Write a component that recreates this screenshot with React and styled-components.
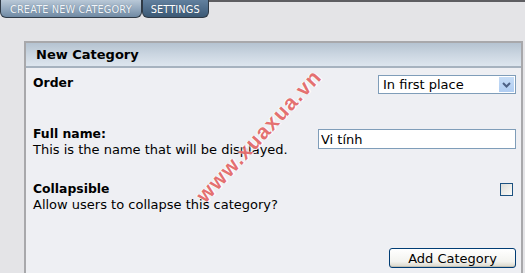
import styled, { createGlobalStyle } from "styled-components";

const Global = createGlobalStyle`
  html, body {
    margin: 0;
    padding: 0;
    background: #e4e4e7;
    font-family: "DejaVu Sans", Verdana, sans-serif;
    color: #000;
  }
`;

const Page = styled.div`
  position: relative;
  width: 525px;
  height: 273px;
  overflow: hidden;
`;

const TabBar = styled.div`
  display: flex;
  height: 19px;
  border-top: 2px solid #5e5e62;
`;
const Tab = styled.div`
  display: flex;
  align-items: center;
  height: 16px;
  margin-top: -2px;
  padding: 1px ${(p) => (p.active ? "9px" : "8px")} 0;
  font-size: 9.8px;
  letter-spacing: 0.1px;
  color: ${(p) => (p.active ? "#f2f6fa" : "#ffffff")};
  background: ${(p) =>
    p.active
      ? "linear-gradient(#b9c8d7, #8ea4ba 60%, #6f89a3)"
      : "linear-gradient(#62809e, #4b6987 60%, #3b5874)"};
  border: 1px solid #2f3a46;
  border-top: none;
  border-radius: 0 0 6px 6px;
  text-shadow: 0 0 1px rgba(40, 60, 80, 0.5);
`;

const Panel = styled.div`
  margin: 20px 2px 0 24px;
  border: 2px solid #a8a8ab;
  border-bottom: none;
  background: #eeeff3;
  height: 240px;
`;
const Header = styled.div`
  height: 23px;
  padding-left: 10px;
  display: flex;
  align-items: center;
  font-size: 13px;
  font-weight: bold;
  background: linear-gradient(#b5c3d1, #cbd6e1 50%, #dde5ee);
  border-bottom: 2px solid #a6b2bf;
`;
const Body = styled.div`
  padding: 7px 5px 0 7px;
  display: flex;
  flex-direction: column;
`;
const Row = styled.div`
  display: flex;
  justify-content: space-between;
  align-items: flex-start;
  height: ${(p) => p.h}px;
`;
const LabelBox = styled.div`
  font-size: 13px;
  line-height: 16px;
`;
const Label = styled.div`
  font-weight: bold;
  font-size: 12.4px;
`;
const SelectWrap = styled.div`
  position: relative;
  width: 138px;
  height: 19px;
  background: #fff;
  border: 1px solid #7f9db9;
  box-sizing: border-box;
`;
const SelectText = styled.div`
  font-size: 13px;
  line-height: 17px;
  padding-left: 4px;
`;
const Arrow = styled.div`
  position: absolute;
  right: 1px;
  top: 1px;
  width: 15px;
  height: 15px;
  background: linear-gradient(#c6dcf6, #b0cdf2);
  display: flex;
  align-items: center;
  justify-content: center;
`;
const TextInput = styled.input`
  width: 198px;
  height: 20px;
  box-sizing: border-box;
  border: 1px solid #7f9db9;
  background: #fff;
  font-family: "DejaVu Sans", Verdana, sans-serif;
  font-size: 13px;
  padding: 0 2px;
  margin-top: 3px;
  outline: none;
`;
const Check = styled.div`
  width: 11px;
  height: 11px;
  margin: 2px 3px 0 0;
  border: 1px solid #1c5180;
  background: linear-gradient(135deg, #dcdcd7, #fbfbf9);
`;
const ButtonRow = styled.div`
  display: flex;
  justify-content: flex-end;
`;
const Button = styled.button`
  width: 127px;
  height: 20px;
  padding: 0;
  border: 1px solid #003c74;
  border-radius: 3px;
  background: linear-gradient(#ffffff, #f3f3ef 70%, #d8d5c8);
  font-family: "DejaVu Sans", Verdana, sans-serif;
  font-size: 13px;
  color: #000;
  box-shadow: inset 0 -1px 0 #c2bfb2;
`;
const Watermark = styled.div`
  position: absolute;
  left: 164px;
  top: 124px;
  width: 190px;
  text-align: center;
  transform: rotate(-47deg);
  font-family: "Liberation Sans", Arial, sans-serif;
  font-weight: bold;
  font-size: 21px;
  letter-spacing: 1.2px;
  color: rgba(222, 74, 74, 0.78);
  text-shadow: 1px 1px 0 rgba(255, 255, 255, 0.9), -1px -1px 0 rgba(255, 255, 255, 0.6);
  white-space: nowrap;
  pointer-events: none;
`;

export default function App() {
  return (
    <Page>
      <Global />
      <TabBar>
        <Tab active>CREATE NEW CATEGORY</Tab>
        <Tab>SETTINGS</Tab>
      </TabBar>
      <Panel>
        <Header>New Category</Header>
        <Body>
          <Row h={51}>
            <LabelBox>
              <Label>Order</Label>
            </LabelBox>
            <SelectWrap>
              <SelectText>In first place</SelectText>
              <Arrow>
                <svg width="9" height="6" viewBox="0 0 9 6">
                  <path d="M1 1 L4.5 4.5 L8 1" fill="none" stroke="#4d6185" strokeWidth="2" />
                </svg>
              </Arrow>
            </SelectWrap>
          </Row>
          <Row h={55}>
            <LabelBox>
              <Label>Full name:</Label>
              This is the name that will be displayed.
            </LabelBox>
            <TextInput defaultValue="Vi tính" />
          </Row>
          <Row h={67}>
            <LabelBox>
              <Label>Collapsible</Label>
              Allow users to collapse this category?
            </LabelBox>
            <Check />
          </Row>
          <ButtonRow>
            <Button>Add Category</Button>
          </ButtonRow>
        </Body>
      </Panel>
      <Watermark>www.xuaxua.vn</Watermark>
    </Page>
  );
}
